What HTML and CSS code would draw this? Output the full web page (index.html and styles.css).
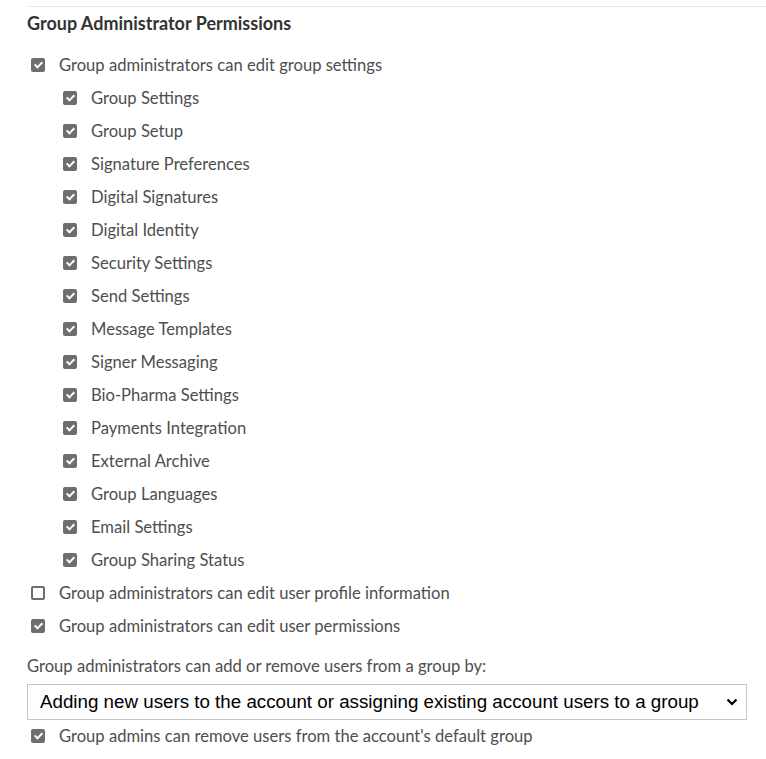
FILE: index.html
```html
<!DOCTYPE html>
<html>
<head>
<meta charset="utf-8">
<link rel="stylesheet" href="styles.css">
</head>
<body>
<div class="panel">
  <h2 class="title">Group Administrator Permissions</h2>
  <ul class="list">
    <li class="item"><span class="cb on"></span><span class="label">Group administrators can edit group settings</span></li>
    <li class="item sub"><span class="cb on"></span><span class="label">Group Settings</span></li>
    <li class="item sub"><span class="cb on"></span><span class="label">Group Setup</span></li>
    <li class="item sub"><span class="cb on"></span><span class="label">Signature Preferences</span></li>
    <li class="item sub"><span class="cb on"></span><span class="label">Digital Signatures</span></li>
    <li class="item sub"><span class="cb on"></span><span class="label">Digital Identity</span></li>
    <li class="item sub"><span class="cb on"></span><span class="label">Security Settings</span></li>
    <li class="item sub"><span class="cb on"></span><span class="label">Send Settings</span></li>
    <li class="item sub"><span class="cb on"></span><span class="label">Message Templates</span></li>
    <li class="item sub"><span class="cb on"></span><span class="label">Signer Messaging</span></li>
    <li class="item sub"><span class="cb on"></span><span class="label">Bio-Pharma Settings</span></li>
    <li class="item sub"><span class="cb on"></span><span class="label">Payments Integration</span></li>
    <li class="item sub"><span class="cb on"></span><span class="label">External Archive</span></li>
    <li class="item sub"><span class="cb on"></span><span class="label">Group Languages</span></li>
    <li class="item sub"><span class="cb on"></span><span class="label">Email Settings</span></li>
    <li class="item sub"><span class="cb on"></span><span class="label">Group Sharing Status</span></li>
    <li class="item"><span class="cb"></span><span class="label">Group administrators can edit user profile information</span></li>
    <li class="item"><span class="cb on"></span><span class="label">Group administrators can edit user permissions</span></li>
  </ul>
  <p class="prompt">Group administrators can add or remove users from a group by:</p>
  <div class="select">
    <span class="select-text">Adding new users to the account or assigning existing account users to a group</span>
    <svg class="chev" width="12" height="8" viewBox="0 0 12 8"><path d="M1.5 1.5 L6 6 L10.5 1.5" fill="none" stroke="#000" stroke-width="2.2"/></svg>
  </div>
  <div class="item last"><span class="cb on"></span><span class="label">Group admins can remove users from the account's default group</span></div>
</div>
</body>
</html>
```
FILE: styles.css
```css
html, body { margin: 0; padding: 0; background: #fff; }
body { font-family: Lato, "Open Sans", sans-serif; color: #4e4e4e; }
.panel {
  margin-top: 6px;
  margin-left: 27px;
  border-top: 1px solid #e8e8e8;
}
.title {
  margin: 0;
  padding-top: 5px;
  height: 36px;
  line-height: 22px;
  font-size: 18px;
  font-weight: 700;
  color: #333;
}
.list { list-style: none; margin: 0; padding: 0; }
.item {
  display: flex;
  align-items: center;
  height: 33px;
  font-size: 16.6px;
  padding-left: 4px;
}
.item.sub { padding-left: 36px; }
.cb {
  box-sizing: border-box;
  width: 14px;
  height: 14px;
  border: 2px solid #6e6e6e;
  border-radius: 2px;
  margin-right: 14px;
  flex: none;
  position: relative;
}
.cb.on { background: #6e6e6e; }
.cb.on::after {
  content: "";
  position: absolute;
  left: 3px;
  top: 0px;
  width: 3px;
  height: 6px;
  border: solid #fff;
  border-width: 0 2px 2px 0;
  transform: rotate(45deg);
}
.prompt {
  margin: 0;
  padding-top: 10px;
  height: 28px;
  line-height: 28px;
  font-size: 16.6px;
}
.select {
  box-sizing: border-box;
  display: flex;
  align-items: center;
  justify-content: space-between;
  width: 720px;
  height: 36px;
  margin-top: 4px;
  border: 1px solid #c5c5c5;
  padding: 0 8px 0 12px;
  font-family: "Liberation Sans", Arial, sans-serif;
  font-size: 18.75px;
  color: #000;
}
.item.last { height: 32px; }
```
